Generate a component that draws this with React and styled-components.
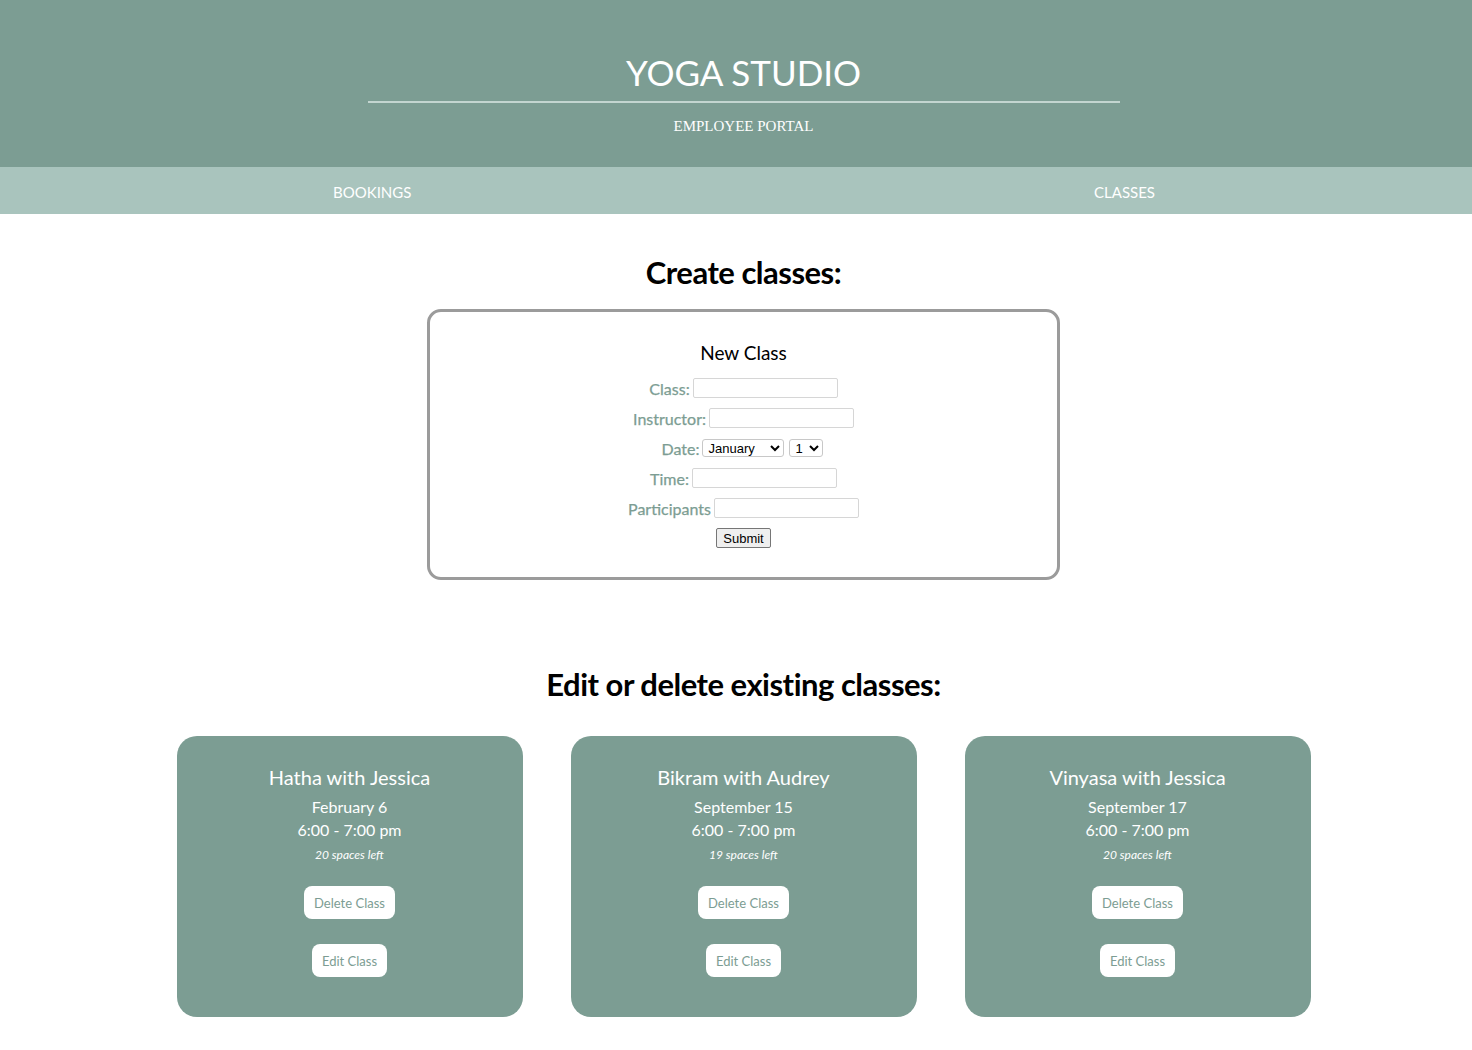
import styled, { createGlobalStyle } from "styled-components";

const classes = [
    { id: 1, name: "Hatha with Jessica", date: "February 6", time: "6:00 - 7:00 pm", spaces: 20 },
    { id: 2, name: "Bikram with Audrey", date: "September 15", time: "6:00 - 7:00 pm", spaces: 19 },
    { id: 3, name: "Vinyasa with Jessica", date: "September 17", time: "6:00 - 7:00 pm", spaces: 20 },
];

const months = ["January", "February", "March", "April", "May", "June", "July", "August", "September", "October", "November", "December"];

export default function App() {
    return (
        <Page>
            <GlobalStyle />
            <Header>
                <Title>YOGA STUDIO</Title>
                <Rule />
                <Subtitle>EMPLOYEE PORTAL</Subtitle>
            </Header>
            <Nav>
                <NavLink>BOOKINGS</NavLink>
                <NavLink>CLASSES</NavLink>
            </Nav>

            <Main>
                <Heading>Create classes:</Heading>
                <FormBox>
                    <FormTitle>New Class</FormTitle>
                    <Row>
                        <Label>Class:</Label>
                        <Input type="text" />
                    </Row>
                    <Row>
                        <Label>Instructor:</Label>
                        <Input type="text" />
                    </Row>
                    <Row>
                        <Label>Date:</Label>
                        <Select $width={82}>
                            {months.map((m) => <option key={m}>{m}</option>)}
                        </Select>
                        <Select $width={34}>
                            {Array.from({ length: 31 }, (_, i) => <option key={i}>{i + 1}</option>)}
                        </Select>
                    </Row>
                    <Row>
                        <Label>Time:</Label>
                        <Input type="text" />
                    </Row>
                    <Row>
                        <Label>Participants</Label>
                        <Input type="text" />
                    </Row>
                    <Submit>Submit</Submit>
                </FormBox>

                <Heading $top={86}>Edit or delete existing classes:</Heading>
                <Cards>
                    {classes.map((c) => (
                        <Card key={c.id}>
                            <CardTitle>{c.name}</CardTitle>
                            <CardText>{c.date}</CardText>
                            <CardText>{c.time}</CardText>
                            <Spaces>{c.spaces} spaces left</Spaces>
                            <CardButton>Delete Class</CardButton>
                            <CardButton>Edit Class</CardButton>
                        </Card>
                    ))}
                </Cards>
            </Main>
        </Page>
    );
}

const GlobalStyle = createGlobalStyle`
    body {
        margin: 0;
        background: #ffffff;
        font-family: 'Lato', sans-serif;
    }
`;

const Page = styled.div`
    display: flex;
    flex-direction: column;
`;

const Header = styled.div`
    height: 167px;
    background: #7c9d93;
    display: flex;
    flex-direction: column;
    align-items: center;
    padding: 51px 0 0 15px;
    box-sizing: border-box;
`;

const Title = styled.h1`
    margin: 0;
    font-family: 'Lato', sans-serif;
    font-weight: 400;
    font-size: 35px;
    line-height: 42px;
    color: #ffffff;
`;

const Rule = styled.div`
    width: 752px;
    height: 2px;
    background: #c3d5d0;
    margin-top: 8px;
`;

const Subtitle = styled.p`
    margin: 14px 0 0;
    font-family: 'Liberation Serif', serif;
    font-size: 15px;
    line-height: 18px;
    color: #ffffff;
`;

const Nav = styled.div`
    height: 47px;
    background: #a9c4bd;
    display: flex;
    justify-content: space-between;
    align-items: center;
    padding: 2px 317px 0 333px;
    box-sizing: border-box;
`;

const NavLink = styled.a`
    font-family: 'Lato', sans-serif;
    font-size: 15px;
    color: #ffffff;
    cursor: pointer;
`;

const Main = styled.main`
    display: flex;
    flex-direction: column;
    align-items: center;
    padding: 0 0 32px 15px;
`;

const Heading = styled.h2`
    margin: ${(p) => p.$top || 40}px 0 0;
    font-family: 'Lato', sans-serif;
    font-weight: 700;
    font-size: 31px;
    line-height: 36px;
    color: #000000;
    letter-spacing: -0.5px;
`;

const FormBox = styled.div`
    width: 633px;
    height: 271px;
    margin-top: 19px;
    border: 3px solid #9b9b9b;
    border-radius: 14px;
    box-sizing: border-box;
    display: flex;
    flex-direction: column;
    align-items: center;
    padding-top: 29px;
`;

const FormTitle = styled.h3`
    margin: 0 0 8px;
    font-family: 'Lato', sans-serif;
    font-weight: 400;
    font-size: 19px;
    line-height: 24px;
    color: #000000;
`;

const Row = styled.div`
    display: flex;
    align-items: center;
    justify-content: center;
    height: 30px;
    gap: 3px;
`;

const Label = styled.label`
    font-family: 'Lato', sans-serif;
    font-size: 16px;
    color: #7c9d93;
    -webkit-text-stroke: 0.25px #7c9d93;
`;

const Input = styled.input`
    width: 145px;
    height: 20px;
    box-sizing: border-box;
    border: 1px solid #d6d6d6;
    border-radius: 2px;
    padding: 0 4px;
`;

const Select = styled.select`
    width: ${(p) => p.$width}px;
    height: 18px;
    margin-right: 2px;
    font-family: 'Liberation Sans', Arial, sans-serif;
    font-size: 13px;
    border: 1px solid #c8c8c8;
    border-radius: 3px;
    background: #ffffff;
    padding: 0 1px;
`;

const Submit = styled.button`
    margin-top: 5px;
    width: 55px;
    height: 20px;
    padding: 0;
    font-family: 'Liberation Sans', Arial, sans-serif;
    font-size: 13px;
    color: #000000;
    background: #efefef;
    border: 1px solid #767676;
    border-radius: 2px;
`;

const Cards = styled.div`
    display: grid;
    grid-template-columns: repeat(3, 346px);
    gap: 48px;
    margin-top: 34px;
`;

const Card = styled.div`
    height: 281px;
    background: #7c9d93;
    border-radius: 20px;
    display: flex;
    flex-direction: column;
    align-items: center;
    padding-top: 29px;
    box-sizing: border-box;
    color: #ffffff;
`;

const CardTitle = styled.h3`
    margin: 0 0 6px;
    font-family: 'Lato', sans-serif;
    font-weight: 400;
    font-size: 20px;
    line-height: 24px;
`;

const CardText = styled.p`
    margin: 0;
    font-family: 'Lato', sans-serif;
    font-size: 16px;
    line-height: 23px;
`;

const Spaces = styled.p`
    margin: 4px 0 21px;
    font-family: 'Lato', sans-serif;
    font-style: italic;
    font-size: 12px;
    line-height: 20px;
`;

const CardButton = styled.button`
    height: 33px;
    padding: 0 10px;
    margin-bottom: 25px;
    background: #ffffff;
    border: none;
    border-radius: 8px;
    font-family: 'Lato', sans-serif;
    font-size: 13px;
    color: #7c9d93;
    cursor: pointer;
`;
